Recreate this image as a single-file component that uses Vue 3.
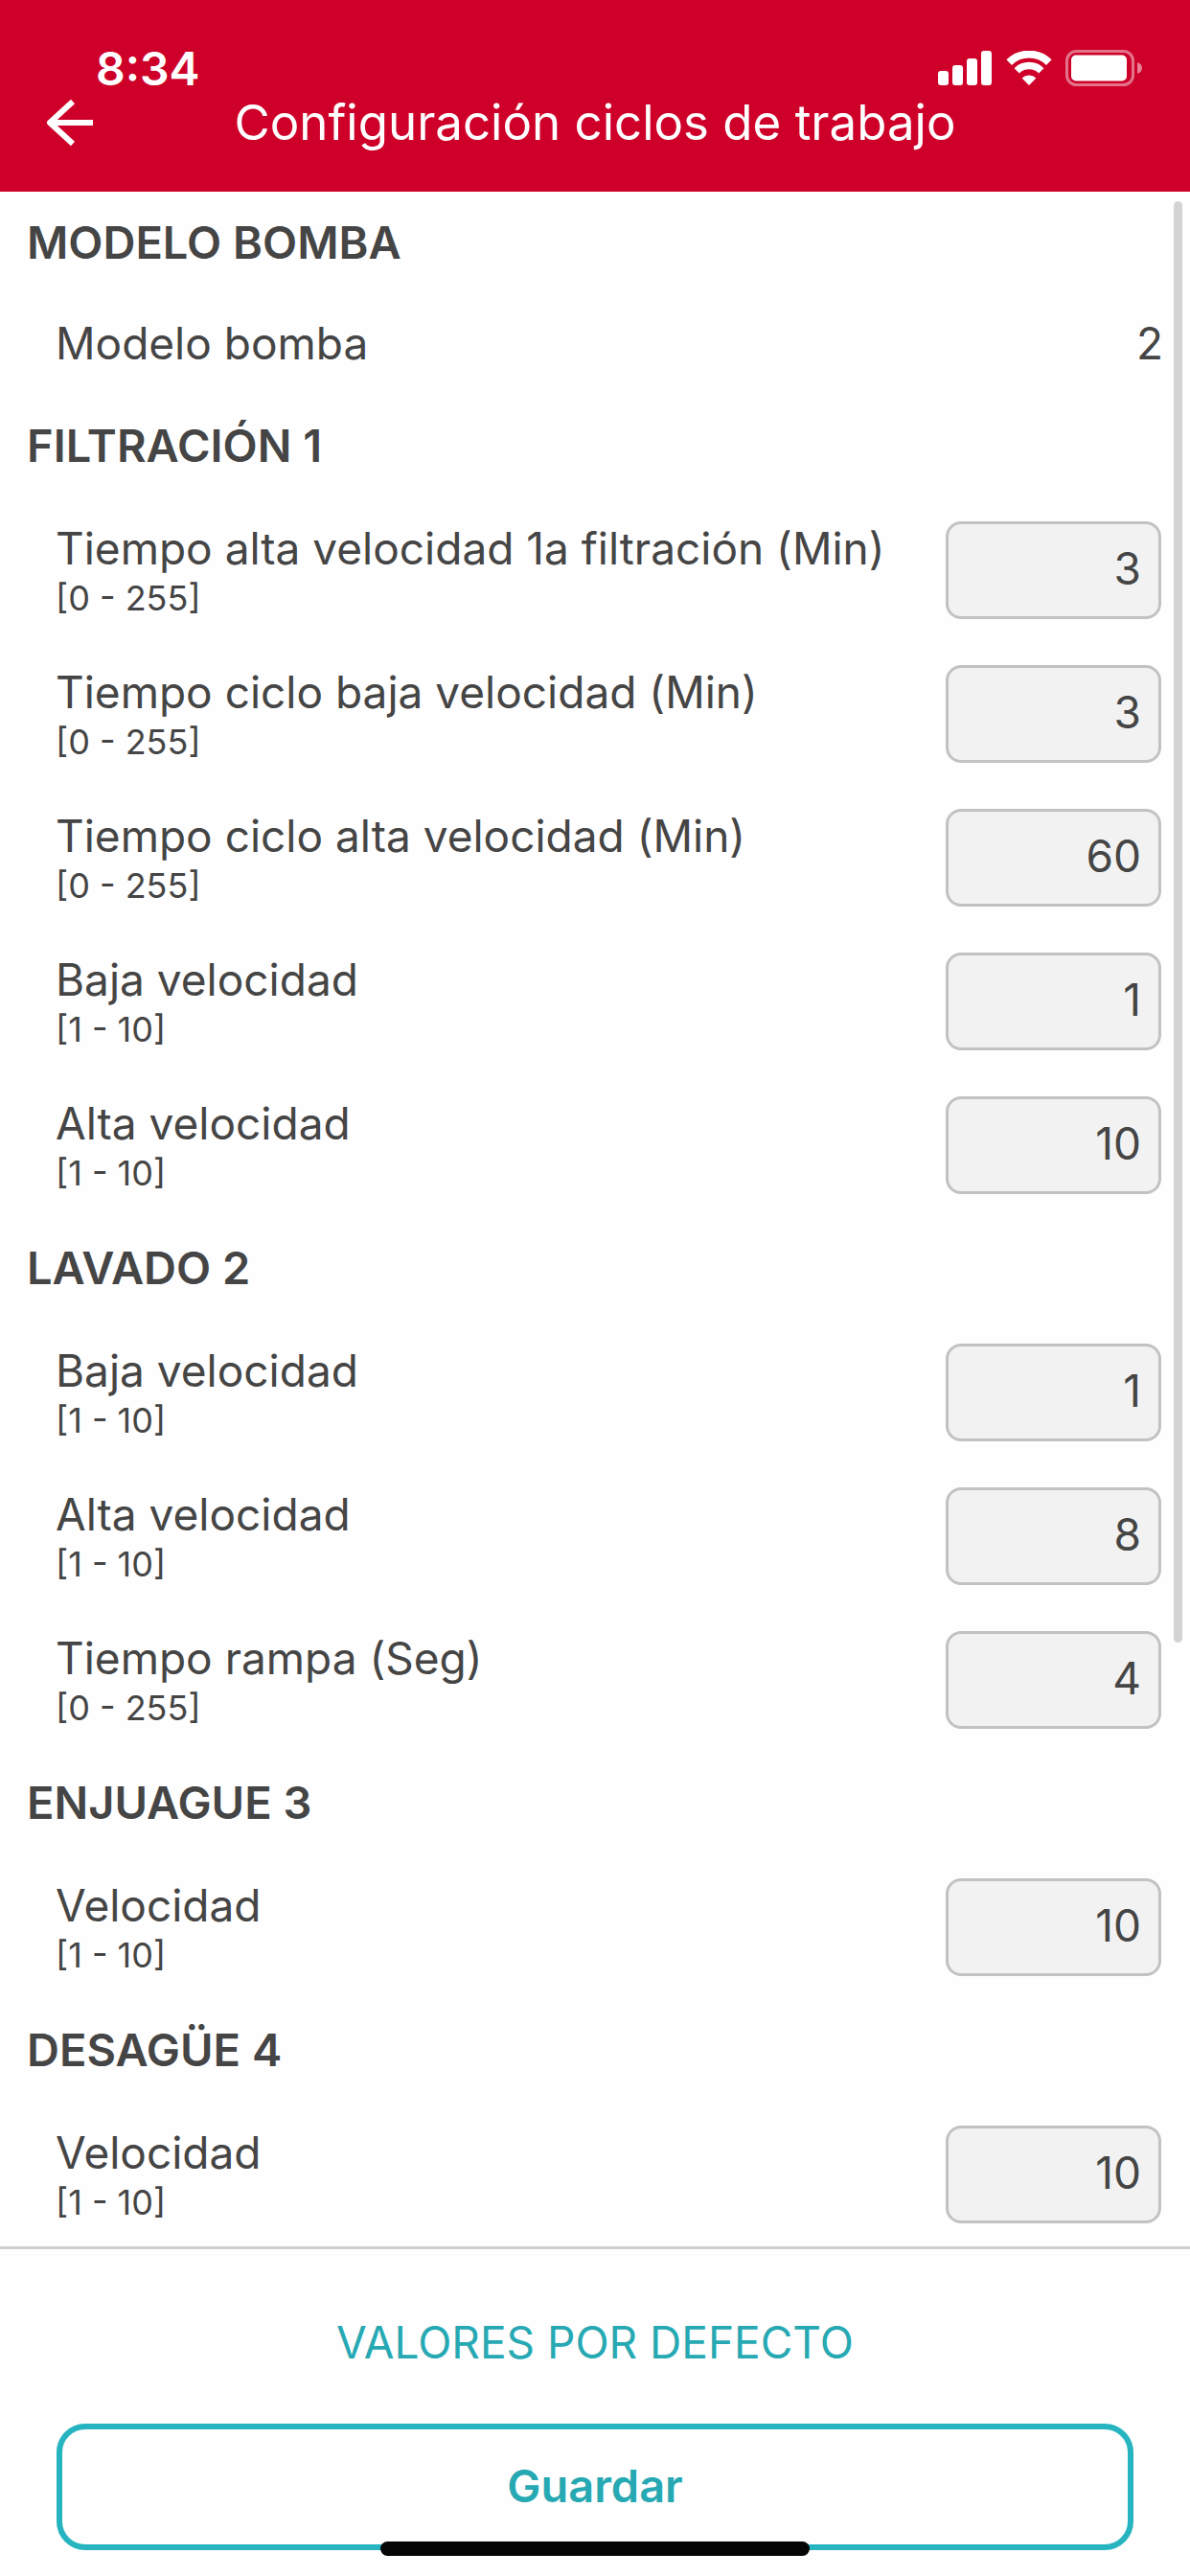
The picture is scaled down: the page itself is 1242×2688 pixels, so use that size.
<script setup>
import { ref } from 'vue';

const model = ref('2');

const sections = ref([
  {
    id: 'filtracion',
    title: 'FILTRACIÓN 1',
    fields: [
      { id: 'tiempo-alta-1a', label: 'Tiempo alta velocidad 1a filtración (Min)', min: 0, max: 255, value: '3' },
      { id: 'ciclo-baja', label: 'Tiempo ciclo baja velocidad (Min)', min: 0, max: 255, value: '3' },
      { id: 'ciclo-alta', label: 'Tiempo ciclo alta velocidad (Min)', min: 0, max: 255, value: '60' },
      { id: 'baja', label: 'Baja velocidad', min: 1, max: 10, value: '1' },
      { id: 'alta', label: 'Alta velocidad', min: 1, max: 10, value: '10' }
    ]
  },
  {
    id: 'lavado',
    title: 'LAVADO 2',
    fields: [
      { id: 'baja', label: 'Baja velocidad', min: 1, max: 10, value: '1' },
      { id: 'alta', label: 'Alta velocidad', min: 1, max: 10, value: '8' },
      { id: 'rampa', label: 'Tiempo rampa (Seg)', min: 0, max: 255, value: '4' }
    ]
  },
  {
    id: 'enjuague',
    title: 'ENJUAGUE 3',
    fields: [
      { id: 'velocidad', label: 'Velocidad', min: 1, max: 10, value: '10' }
    ]
  },
  {
    id: 'desague',
    title: 'DESAGÜE 4',
    fields: [
      { id: 'velocidad', label: 'Velocidad', min: 1, max: 10, value: '10' }
    ]
  }
]);
</script>

<template>
  <div class="screen">
    <header class="header">
      <div class="status-bar">
        <span class="time">8:34</span>
        <div class="status-icons">
          <svg width="57" height="36" viewBox="0 0 57 36" fill="#fff">
            <rect x="0" y="21" width="11" height="15" rx="3" />
            <rect x="15" y="15" width="11" height="21" rx="3" />
            <rect x="30" y="8" width="11" height="28" rx="3" />
            <rect x="45" y="0" width="11" height="36" rx="3" />
          </svg>
          <svg width="48" height="36" viewBox="0 0 48 36" fill="none" stroke="#fff">
            <path d="M3.2 12.2a29.5 29.5 0 0 1 41.6 0" stroke-width="8" />
            <path d="M11.2 20.8a18.2 18.2 0 0 1 25.6 0" stroke-width="7.5" />
            <path d="M24 36l-7.4-7.6a10.8 10.8 0 0 1 14.8 0z" fill="#fff" stroke="none" />
          </svg>
          <svg width="80" height="38" viewBox="0 0 80 38">
            <rect x="1.5" y="1.5" width="69" height="35" rx="10" fill="none" stroke="#fff" stroke-opacity="0.45" stroke-width="3" />
            <rect x="6" y="5.5" width="58" height="27" rx="5" fill="#fff" />
            <path d="M75 13c3 1 5 3 5 6s-2 5-5 6z" fill="#fff" fill-opacity="0.5" />
          </svg>
        </div>
      </div>
      <div class="title-bar">
        <button class="back" type="button" aria-label="Atrás">
          <svg width="50" height="50" viewBox="0 0 50 50" fill="none" stroke="#fff" stroke-width="6" stroke-linejoin="round">
            <path d="M49 25H5" />
            <path d="M28 3L4 25l24 22" />
          </svg>
        </button>
        <h1 class="title">Configuración ciclos de trabajo</h1>
      </div>
    </header>

    <main class="content">
      <section>
        <h2 class="section-title">MODELO BOMBA</h2>
        <div class="model-row">
          <span>Modelo bomba</span>
          <span>{{ model }}</span>
        </div>
      </section>

      <section v-for="section in sections" :key="section.id">
        <h2 class="section-title">{{ section.title }}</h2>
        <div v-for="field in section.fields" :key="field.id" class="row">
          <label class="row-label" :for="`${section.id}-${field.id}`">
            <span class="row-name">{{ field.label }}</span>
            <span class="row-range">[{{ field.min }} - {{ field.max }}]</span>
          </label>
          <input
            :id="`${section.id}-${field.id}`"
            v-model="field.value"
            class="row-input"
            type="text"
            inputmode="numeric"
          />
        </div>
      </section>

      <div class="scroll-thumb"></div>
    </main>

    <footer class="footer">
      <button class="defaults" type="button">VALORES POR DEFECTO</button>
      <button class="save" type="button">Guardar</button>
      <div class="home-indicator"></div>
    </footer>
  </div>
</template>

<style>
body {
  margin: 0;
  background: #fff;
}
</style>

<style scoped>
.screen {
  display: flex;
  flex-direction: column;
  min-height: 100vh;
  background: #fefefe;
  color: #454545;
  font-family: Inter, Roboto, 'Liberation Sans', sans-serif;
  font-size: 46px;
}

button {
  border: none;
  background: none;
  padding: 0;
  font-family: inherit;
  cursor: pointer;
}

.header {
  display: flex;
  flex-direction: column;
  background: #ce0029;
  color: #fff;
  padding: 46px 0 40px;
}

.status-bar {
  display: flex;
  justify-content: space-between;
  align-items: center;
  height: 50px;
  padding: 0 50px 0 100px;
}

.time {
  font-size: 48px;
  font-weight: 600;
}

.status-icons {
  display: flex;
  align-items: center;
  gap: 14px;
}

.title-bar {
  display: grid;
  grid-template-columns: 50px 1fr 50px;
  align-items: center;
  height: 64px;
  padding: 0 48px;
}

.back {
  display: flex;
}

.title {
  margin: 0;
  font-size: 51px;
  font-weight: 400;
  line-height: 64px;
  text-align: center;
}

.content {
  position: relative;
  flex: 1;
}

.section-title {
  display: flex;
  align-items: center;
  height: 104px;
  margin: 0;
  padding: 0 28px 4px;
  font-size: 47px;
  font-weight: 600;
}

.model-row {
  display: flex;
  justify-content: space-between;
  align-items: center;
  height: 100px;
  padding: 0 28px 4px 58px;
}

.row {
  display: flex;
  justify-content: space-between;
  align-items: center;
  height: 150px;
  padding: 0 30px 0 58px;
}

.row-label {
  display: flex;
  flex-direction: column;
}

.row-name {
  line-height: 58px;
}

.row-range {
  font-size: 36px;
  line-height: 46px;
}

.row-input {
  box-sizing: border-box;
  width: 225px;
  height: 102px;
  padding: 0 18px 4px;
  border: 3px solid #c2c2c2;
  border-radius: 16px;
  background: #f2f2f2;
  color: inherit;
  font-family: inherit;
  font-size: 46px;
  text-align: right;
}

.scroll-thumb {
  position: absolute;
  top: 10px;
  right: 8px;
  width: 9px;
  height: 1504px;
  border-radius: 5px;
  background: #d3d3d3;
}

.footer {
  position: relative;
  display: flex;
  flex-direction: column;
  gap: 50px;
  padding: 62px 59px 27px;
  border-top: 3px solid #cfcfcf;
}

.defaults {
  align-self: center;
  color: #27a9b3;
  font-size: 46px;
  line-height: 70px;
}

.save {
  height: 132px;
  padding-bottom: 4px;
  border: 6px solid #26b5c0;
  border-radius: 30px;
  color: #27a9b3;
  font-size: 47px;
  font-weight: 600;
}

.home-indicator {
  position: absolute;
  left: 32%;
  right: 32%;
  bottom: 21px;
  height: 15px;
  border-radius: 8px;
  background: #050505;
}
</style>
